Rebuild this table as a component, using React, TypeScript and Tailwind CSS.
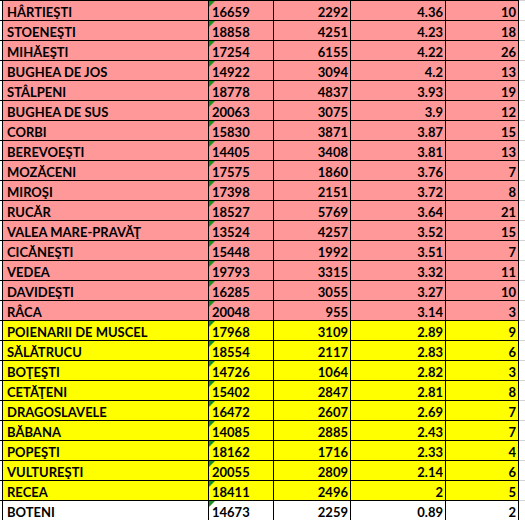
import React from "react";

type Row = [string, string, string, string, string, "r" | "y" | "w"];

const rows: Row[] = [
  ["HÂRTIEŞTI", "16659", "2292", "4.36", "10", "r"],
  ["STOENEŞTI", "18858", "4251", "4.23", "18", "r"],
  ["MIHĂEŞTI", "17254", "6155", "4.22", "26", "r"],
  ["BUGHEA DE JOS", "14922", "3094", "4.2", "13", "r"],
  ["STÂLPENI", "18778", "4837", "3.93", "19", "r"],
  ["BUGHEA DE SUS", "20063", "3075", "3.9", "12", "r"],
  ["CORBI", "15830", "3871", "3.87", "15", "r"],
  ["BEREVOEŞTI", "14405", "3408", "3.81", "13", "r"],
  ["MOZĂCENI", "17575", "1860", "3.76", "7", "r"],
  ["MIROŞI", "17398", "2151", "3.72", "8", "r"],
  ["RUCĂR", "18527", "5769", "3.64", "21", "r"],
  ["VALEA MARE-PRAVĂŢ", "13524", "4257", "3.52", "15", "r"],
  ["CICĂNEŞTI", "15448", "1992", "3.51", "7", "r"],
  ["VEDEA", "19793", "3315", "3.32", "11", "r"],
  ["DAVIDEŞTI", "16285", "3055", "3.27", "10", "r"],
  ["RÂCA", "20048", "955", "3.14", "3", "r"],
  ["POIENARII DE MUSCEL", "17968", "3109", "2.89", "9", "y"],
  ["SĂLĂTRUCU", "18554", "2117", "2.83", "6", "y"],
  ["BOŢEŞTI", "14726", "1064", "2.82", "3", "y"],
  ["CETĂŢENI", "15402", "2847", "2.81", "8", "y"],
  ["DRAGOSLAVELE", "16472", "2607", "2.69", "7", "y"],
  ["BĂBANA", "14085", "2885", "2.43", "7", "y"],
  ["POPEŞTI", "18162", "1716", "2.33", "4", "y"],
  ["VULTUREŞTI", "20055", "2809", "2.14", "6", "y"],
  ["RECEA", "18411", "2496", "2", "5", "y"],
  ["BOTENI", "14673", "2259", "0.89", "2", "w"],
];

const bgFor = (c: Row[5]) =>
  c === "r" ? "bg-[#ff9999]" : c === "y" ? "bg-[#ffff00]" : "bg-white";

export default function App() {
  return (
    <div
      className="w-[525px] h-[521px] bg-white overflow-hidden text-black font-bold text-[13px]"
      style={{ fontFamily: "Lato, 'Liberation Sans', sans-serif" }}
    >
      {rows.map((r, i) => {
        const bg = bgFor(r[5]);
        return (
          <div key={i} className="flex h-[20px]">
            <div className="w-[2px] border-t border-black" />
            <div className={`w-[206px] border-t border-l border-black pl-[4px] pt-[3px] leading-[16px] whitespace-nowrap ${bg}`}>
              {r[0]}
            </div>
            <div className={`relative w-[65px] border-t border-l border-black pl-[3px] pt-[3px] leading-[16px] ${bg}`}>
              <svg className="absolute left-0 top-0" width="6" height="6" viewBox="0 0 6 6">
                <polygon points="0,0 6,0 0,6" fill="#1f8f1f" />
              </svg>
              {r[1]}
            </div>
            <div className={`w-[77px] border-t border-l border-black pr-[2px] pt-[3px] leading-[16px] text-right ${bg}`}>
              {r[2]}
            </div>
            <div className={`w-[95px] border-t border-l border-black pr-[2px] pt-[3px] leading-[16px] text-right ${bg}`}>
              {r[3]}
            </div>
            <div className={`w-[74px] border-t border-l border-r border-black pr-[2px] pt-[3px] leading-[16px] text-right ${bg}`}>
              {r[4]}
            </div>
            <div className="flex-1 border-t border-[#d4d4d4]" />
          </div>
        );
      })}
    </div>
  );
}
